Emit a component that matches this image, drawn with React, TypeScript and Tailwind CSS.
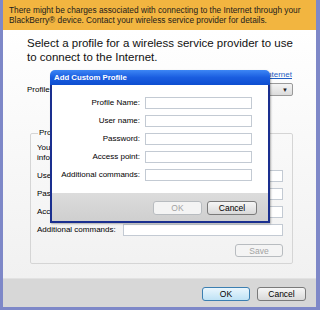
import React from 'react';

const font = { fontFamily: '"Liberation Sans", Arial, sans-serif' };

function Field({ className = '' }: { className?: string }) {
    return <div className={`h-[12px] bg-white border border-[#c3cad3] ${className}`} />;
}

function Button({ label, kind = 'normal', className = '' }: { label: string; kind?: 'normal' | 'default' | 'disabled'; className?: string }) {
    const styles = {
        normal: 'border-[#7a7a7a] bg-gradient-to-b from-[#f6f6f6] to-[#d9d9d9] text-black',
        default: 'border-[#3c7fb1] bg-gradient-to-b from-[#eaf6fd] to-[#bfe2f5] text-black',
        disabled: 'border-[#b8bcc0] bg-[#f4f4f4] text-[#a3a3a3]',
    };
    return (
        <div className={`flex items-center justify-center rounded-[3px] border text-[8.5px] ${styles[kind]} ${className}`}>
            {label}
        </div>
    );
}

const dialogRows = ['Profile Name:', 'User name:', 'Password:', 'Access point:', 'Additional commands:'];
const backRows = ['User name:', 'Password:', 'Access point:', 'Additional commands:'];

export default function App() {
    return (
        <div className="relative w-[320px] h-[310px] overflow-hidden bg-white text-black" style={font}>
            <div className="flex flex-col w-full h-full border-l-[3px] border-r-[4px] border-b-[3px] border-[#7e88c8]">
                {/* warning banner */}
                <div className="h-[30px] bg-[#f2b540] px-[6px] pt-[5px] text-[8.3px] leading-[10px] text-[#1c1c1c]">
                    There might be charges associated with connecting to the Internet through your
                    <br />
                    BlackBerry® device. Contact your wireless service provider for details.
                </div>

                {/* main content */}
                <div className="flex flex-col h-[248px] bg-gradient-to-b from-white to-[#f1f1f1]">
                    <div className="pl-[24px] pt-[6px] text-[11.5px] leading-[14px] text-[#111]">
                        Select a profile for a wireless service provider to use
                        <br />
                        to connect to the Internet.
                    </div>

                    <div className="flex justify-end pr-[24px] mt-[6px] text-[8px] leading-[10px]">
                        <span className="text-[#1f5fc4] underline">Internet</span>
                    </div>

                    <div className="flex items-center mt-[3px] pl-[24px] pr-[23px]">
                        <span className="text-[8px] w-[44px]">Profile:</span>
                        <div className="flex-1 h-[13px] flex items-center justify-end pr-[4px] rounded-[2px] border border-[#9a9a9a] bg-gradient-to-b from-[#f4f4f4] to-[#dcdcdc]">
                            <span className="text-[6px] leading-none text-[#222]">▼</span>
                        </div>
                    </div>

                    <fieldset className="ml-[27px] w-[263px] mt-[32px] border border-[#d5d5d5] rounded-[2px] px-[6px] pb-[6px] pt-[5px] text-[8px] leading-[10px]">
                        <legend className="ml-[1px] px-[1px] text-[8px] leading-[10px]">Profile settings</legend>
                        <div>
                            You can type the settings
                            <br />
                            information here.
                        </div>
                        <div className="flex flex-col gap-[6px] mt-[7px]">
                            {backRows.map((r) => (
                                <div key={r} className="flex items-center h-[12px]">
                                    <span className="w-[86px] whitespace-nowrap">{r}</span>
                                    <Field className="w-[160px]" />
                                </div>
                            ))}
                        </div>
                        <div className="flex justify-end mt-[8px] pr-[3px]">
                            <Button label="Save" kind="disabled" className="w-[48px] h-[13px]" />
                        </div>
                    </fieldset>
                </div>

                {/* footer */}
                <div className="flex-1 flex justify-end gap-[7px] pt-[8px] pr-[10px] bg-[#d7d7d7] border-t border-[#e2e2e2]">
                    <Button label="OK" kind="default" className="w-[48px] h-[14px]" />
                    <Button label="Cancel" className="w-[49px] h-[14px]" />
                </div>
            </div>

            {/* modal dialog */}
            <div className="absolute left-[50px] top-[70px] w-[220px] h-[153px] flex flex-col rounded-t-[5px] overflow-hidden shadow-[1px_1px_2px_rgba(0,0,0,0.3)]">
                <div className="h-[15px] flex items-center pl-[4px] bg-gradient-to-b from-[#3d86f5] via-[#1a5de0] to-[#0d4ed0] text-white text-[7.8px] font-bold">
                    Add Custom Profile
                </div>
                <div className="flex-1 flex flex-col border-x-2 border-b-2 border-[#1a2f8f]">
                    <div className="h-[108px] bg-white flex flex-col gap-[6px] pt-[12px] text-[8px]">
                        {dialogRows.map((r) => (
                            <div key={r} className="flex items-center h-[12px]">
                                <span className="w-[93px] text-right pr-[5px] whitespace-nowrap">{r}</span>
                                <Field className="w-[107px]" />
                            </div>
                        ))}
                    </div>
                    <div className="flex-1 flex justify-end gap-[5px] pt-[8px] pr-[11px] bg-gradient-to-b from-[#dcdcdc] to-[#cfcfcf]">
                        <Button label="OK" kind="disabled" className="w-[49px] h-[14px]" />
                        <Button label="Cancel" className="w-[50px] h-[14px]" />
                    </div>
                </div>
            </div>
        </div>
    );
}
